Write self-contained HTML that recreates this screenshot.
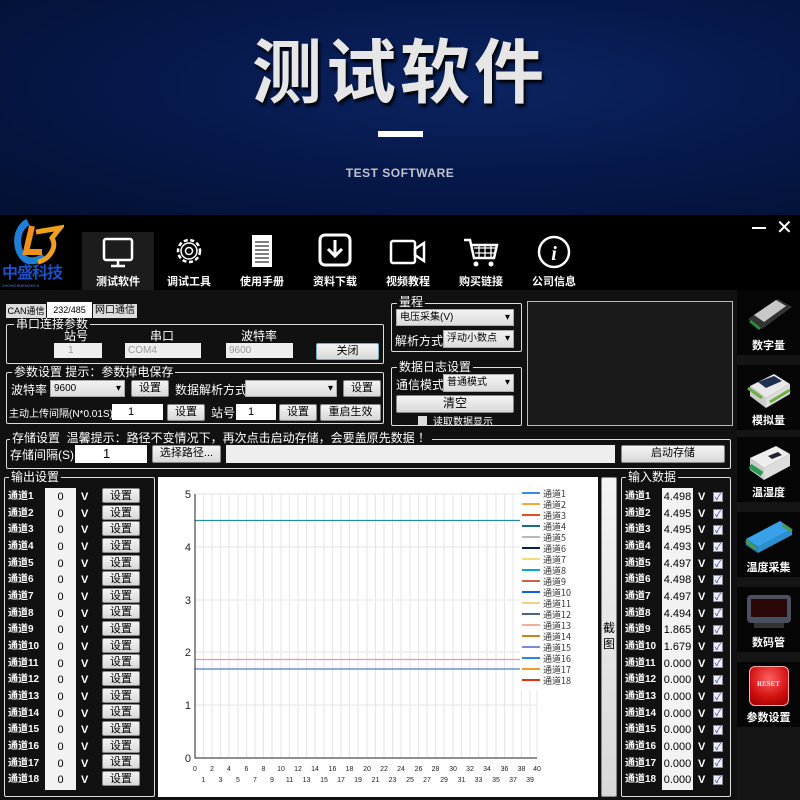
<!DOCTYPE html>
<html><head><meta charset="utf-8"><style>
*{margin:0;padding:0;box-sizing:border-box}
body{width:800px;height:800px;overflow:hidden;background:#000;font-family:"Liberation Sans","Noto Sans CJK SC",sans-serif;position:relative;color:#fff}
.a{position:absolute}
.banner{left:0;top:0;width:800px;height:215px;background:radial-gradient(ellipse at 60% 40%,#0b2461 0%,#06184a 50%,#031032 100%)}
.title{left:0;width:800px;top:28px;text-align:center;font-size:70px;font-weight:bold;letter-spacing:4px;color:#e6e6e6;font-family:"Noto Sans CJK SC",sans-serif;text-shadow:2px 3px 3px #000;line-height:80px}
.t{font-size:12px;line-height:14px;color:#fff;white-space:nowrap}
.menu{top:232px;width:72px;height:58px;text-align:center}
.menu .l{position:absolute;top:41px;width:100%;font-size:11px;font-weight:bold;color:#fff}
.grp{border:1px solid #ddd;border-radius:2px}
.gl{background:#111;padding:0 2px;font-size:12px;line-height:13px;color:#fff}
.btn{background:linear-gradient(#f4f4f4,#d8d8d8);border:1px solid #888;color:#000;font-size:11px;text-align:center;line-height:15px;border-radius:2px}
.box{background:#fff;color:#000;font-size:11px;line-height:16px}
.sel{background:linear-gradient(#f2f2f2,#dcdcdc);border:1px solid #aaa;color:#000;font-size:10px;line-height:15px;padding-left:3px}
.sel:after{content:"▾";position:absolute;right:3px;top:0;font-size:10px}
.side{left:737px;width:63px;height:65px;background:#050505;text-align:center}
.side .l{position:absolute;bottom:2px;width:100%;font-size:11px;font-weight:bold}
.cb{width:10px;height:10px;background:#eef;border:1px solid #889;font-size:9px;line-height:8px;color:#236;text-align:center}
</style></head><body>
<div class="a banner"></div>
<div class="a title">测试软件</div>
<div class="a" style="left:378px;top:131px;width:45px;height:6px;background:#fff"></div>
<div class="a" style="left:0;width:800px;top:166px;text-align:center;font-size:12px;font-weight:bold;color:#bfc3cc;letter-spacing:.5px">TEST SOFTWARE</div>

<!-- header -->
<div class="a" style="left:0;top:215px;width:800px;height:75px;background:#000"></div>
<svg class="a" style="left:12px;top:218px" width="52" height="48" viewBox="0 0 52 48">
<path d="M16 4 C4 10 2 30 12 40 C16 44 26 44 32 38" stroke="#1e7fd8" stroke-width="7" fill="none"/>
<path d="M20 8 L14 34 L30 34" stroke="#f0901a" stroke-width="6" fill="none"/>
<path d="M24 14 L48 10 L40 20 C46 30 36 42 26 44" stroke="#f0a020" stroke-width="5" fill="none"/>
</svg>
<div class="a" style="left:2px;top:266px;font-size:16px;font-weight:bold;color:#1d4fc4;letter-spacing:-1px;line-height:16px">中盛科技</div>
<div class="a" style="left:2px;top:283px;font-size:4px;color:#5a7ed8">ZHONGSHENGKEJI</div>
<div class="a menu" style="left:82px;background:#1c1c1c"><svg width="34" height="34" viewBox="0 0 34 34" style="margin-top:4px"><rect x="3" y="3" width="28" height="21" rx="2" fill="none" stroke="#fff" stroke-width="2.5"/><path d="M17 24v5M10 30h14" stroke="#fff" stroke-width="2.5"/></svg><div class="l">测试软件</div></div>
<div class="a menu" style="left:153px"><svg width="34" height="34" viewBox="0 0 34 34" style="margin-top:2px"><circle cx="17" cy="17" r="11" fill="none" stroke="#fff" stroke-width="2.5" stroke-dasharray="4 2.6"/><circle cx="17" cy="17" r="8" fill="none" stroke="#fff" stroke-width="1.5"/><circle cx="17" cy="17" r="3.5" fill="none" stroke="#fff" stroke-width="1.5"/></svg><div class="l">调试工具</div></div>
<div class="a menu" style="left:226px"><svg width="34" height="38" viewBox="0 0 34 38"><rect x="7" y="3" width="20" height="32" fill="#fff"/><path d="M10 10h14M10 14h14M10 18h14M10 22h14M10 26h14M10 30h14" stroke="#333" stroke-width="1.2"/></svg><div class="l">使用手册</div></div>
<div class="a menu" style="left:299px"><svg width="36" height="36" viewBox="0 0 36 36"><rect x="3" y="3" width="30" height="30" rx="5" fill="none" stroke="#fff" stroke-width="3"/><path d="M18 8v16M11 17l7 7 7-7" stroke="#fff" stroke-width="3" fill="none"/></svg><div class="l">资料下载</div></div>
<div class="a menu" style="left:372px"><svg width="40" height="34" viewBox="0 0 40 34" style="margin-top:3px"><rect x="3" y="6" width="24" height="22" rx="2" fill="none" stroke="#fff" stroke-width="2.5"/><path d="M27 14l9-6v18l-9-6z" fill="none" stroke="#fff" stroke-width="2.5"/></svg><div class="l">视频教程</div></div>
<div class="a menu" style="left:445px"><svg width="40" height="36" viewBox="0 0 40 36" style="margin-top:2px"><path d="M3 6h6l4 18h20l3-13H11" fill="none" stroke="#fff" stroke-width="2.5"/><path d="M13 14h22M14 19h20M18 11v13M24 11v13M30 11v13" stroke="#fff" stroke-width="1.3"/><circle cx="15" cy="30" r="2.5" fill="#fff"/><circle cx="30" cy="30" r="2.5" fill="#fff"/></svg><div class="l">购买链接</div></div>
<div class="a menu" style="left:518px"><svg width="36" height="36" viewBox="0 0 36 36" style="margin-top:2px"><circle cx="18" cy="18" r="15" fill="none" stroke="#fff" stroke-width="2.5"/><text x="18" y="26" text-anchor="middle" font-family="Liberation Serif" font-style="italic" font-weight="bold" font-size="20" fill="#fff">i</text></svg><div class="l">公司信息</div></div>
<div class="a" style="left:752px;top:227px;width:14px;height:2px;background:#fff"></div>
<div class="a" style="left:776px;top:215px;font-size:20px;color:#fff">✕</div>

<!-- main bg -->
<div class="a" style="left:0;top:290px;width:737px;height:510px;background:#111"></div>

<!-- tabs -->
<div class="a" style="left:6px;top:304px;width:40px;height:14px;background:#ddd;color:#000;font-size:9px;line-height:14px;text-align:center">CAN通信</div>
<div class="a" style="left:47px;top:302px;width:45px;height:16px;background:#fff;color:#000;font-size:9px;line-height:16px;text-align:center">232/485</div>
<div class="a" style="left:93px;top:304px;width:44px;height:14px;background:#ddd;color:#000;font-size:10px;line-height:14px;text-align:center">网口通信</div>

<div class="a grp" style="left:6px;top:324px;width:378px;height:40px"></div>
<div class="a gl" style="left:14px;top:318px">串口连接参数</div>
<div class="a t" style="left:64px;top:329px">站号</div>
<div class="a t" style="left:150px;top:329px">串口</div>
<div class="a t" style="left:241px;top:329px">波特率</div>
<div class="a" style="left:54px;top:343px;width:48px;height:15px;background:#eee;color:#999;font-size:10px;line-height:15px;padding-left:14px">1</div>
<div class="a" style="left:125px;top:343px;width:76px;height:15px;background:#eee;color:#999;font-size:10px;line-height:15px;padding-left:3px">COM4</div>
<div class="a" style="left:226px;top:343px;width:67px;height:15px;background:#eee;color:#999;font-size:10px;line-height:15px;padding-left:3px">9600</div>
<div class="a btn" style="left:316px;top:343px;width:63px;height:17px;border-color:#7ab">关闭</div>

<div class="a grp" style="left:6px;top:372px;width:378px;height:52px"></div>
<div class="a gl" style="left:12px;top:366px">参数设置 提示：参数掉电保存</div>
<div class="a t" style="left:11px;top:383px">波特率</div>
<div class="a sel" style="left:50px;top:380px;width:75px;height:17px">9600</div>
<div class="a btn" style="left:131px;top:380px;width:38px;height:17px">设置</div>
<div class="a t" style="left:175px;top:383px">数据解析方式</div>
<div class="a sel" style="left:245px;top:380px;width:92px;height:17px"></div>
<div class="a btn" style="left:343px;top:380px;width:38px;height:17px">设置</div>
<div class="a" style="left:9px;top:405px;font-size:10px;color:#fff">主动上传间隔(N*0.01S)</div>
<div class="a box" style="left:112px;top:404px;width:51px;height:16px;padding-left:16px">1</div>
<div class="a btn" style="left:167px;top:404px;width:38px;height:17px">设置</div>
<div class="a t" style="left:211px;top:406px">站号</div>
<div class="a box" style="left:236px;top:404px;width:40px;height:16px;padding-left:12px">1</div>
<div class="a btn" style="left:279px;top:404px;width:38px;height:17px">设置</div>
<div class="a btn" style="left:320px;top:404px;width:61px;height:17px">重启生效</div>

<div class="a grp" style="left:391px;top:303px;width:131px;height:49px"></div>
<div class="a gl" style="left:397px;top:296px">量程</div>
<div class="a sel" style="left:396px;top:309px;width:118px;height:17px">电压采集(V)</div>
<div class="a t" style="left:395px;top:334px">解析方式</div>
<div class="a sel" style="left:443px;top:330px;width:71px;height:18px">浮动小数点</div>
<div class="a grp" style="left:391px;top:367px;width:131px;height:59px"></div>
<div class="a gl" style="left:397px;top:361px">数据日志设置</div>
<div class="a t" style="left:396px;top:378px">通信模式</div>
<div class="a sel" style="left:443px;top:374px;width:71px;height:18px">普通模式</div>
<div class="a btn" style="left:396px;top:395px;width:118px;height:18px;font-size:12px">清空</div>
<div class="a" style="left:418px;top:416px;width:9px;height:9px;background:#ddd"></div>
<div class="a" style="left:433px;top:413px;font-size:10px;color:#fff">读取数据显示</div>
<div class="a" style="left:527px;top:301px;width:206px;height:125px;background:#1a1a1a;border:1px solid #bbb"></div>

<div class="a grp" style="left:6px;top:439px;width:725px;height:30px"></div>
<div class="a gl" style="left:10px;top:432px">存储设置&nbsp; 温馨提示：路径不变情况下，再次点击启动存储，会要盖原先数据 ！</div>
<div class="a t" style="left:10px;top:448px">存储间隔(S)</div>
<div class="a box" style="left:75px;top:445px;width:72px;height:18px;padding-left:28px;font-size:13px;line-height:18px">1</div>
<div class="a btn" style="left:152px;top:445px;width:69px;height:18px;font-size:11px">选择路径...</div>
<div class="a" style="left:226px;top:445px;width:389px;height:18px;background:#eee"></div>
<div class="a btn" style="left:621px;top:445px;width:104px;height:18px;font-size:11px">启动存储</div>

<!-- output group -->
<div class="a grp" style="left:4px;top:477px;width:151px;height:320px"></div>
<div class="a gl" style="left:9px;top:471px">输出设置</div>
<div class="a" style="left:8px;top:489px;line-height:16.65px;font-size:10px;font-weight:bold;color:#fff">通道1<br>通道2<br>通道3<br>通道4<br>通道5<br>通道6<br>通道7<br>通道8<br>通道9<br>通道10<br>通道11<br>通道12<br>通道13<br>通道14<br>通道15<br>通道16<br>通道17<br>通道18</div>
<div class="a" style="left:45px;top:488px;width:31px;height:302px;background:#f2f2f2;color:#000;text-align:center;line-height:16.65px;font-size:11px;padding-top:1px">0<br>0<br>0<br>0<br>0<br>0<br>0<br>0<br>0<br>0<br>0<br>0<br>0<br>0<br>0<br>0<br>0<br>0</div>
<div class="a" style="left:81px;top:489px;line-height:16.65px;font-size:11px;font-weight:bold;color:#fff">V<br>V<br>V<br>V<br>V<br>V<br>V<br>V<br>V<br>V<br>V<br>V<br>V<br>V<br>V<br>V<br>V<br>V</div>
<div class="a" style="left:102px;top:488px;width:38px">
<div class="btn" style="height:15px;margin-bottom:1.65px">设置</div><div class="btn" style="height:15px;margin-bottom:1.65px">设置</div><div class="btn" style="height:15px;margin-bottom:1.65px">设置</div><div class="btn" style="height:15px;margin-bottom:1.65px">设置</div><div class="btn" style="height:15px;margin-bottom:1.65px">设置</div><div class="btn" style="height:15px;margin-bottom:1.65px">设置</div><div class="btn" style="height:15px;margin-bottom:1.65px">设置</div><div class="btn" style="height:15px;margin-bottom:1.65px">设置</div><div class="btn" style="height:15px;margin-bottom:1.65px">设置</div><div class="btn" style="height:15px;margin-bottom:1.65px">设置</div><div class="btn" style="height:15px;margin-bottom:1.65px">设置</div><div class="btn" style="height:15px;margin-bottom:1.65px">设置</div><div class="btn" style="height:15px;margin-bottom:1.65px">设置</div><div class="btn" style="height:15px;margin-bottom:1.65px">设置</div><div class="btn" style="height:15px;margin-bottom:1.65px">设置</div><div class="btn" style="height:15px;margin-bottom:1.65px">设置</div><div class="btn" style="height:15px;margin-bottom:1.65px">设置</div><div class="btn" style="height:15px;margin-bottom:1.65px">设置</div></div>

<!-- chart -->
<svg class="a" style="left:158px;top:477px" width="440" height="320" viewBox="158 477 440 320">
<rect x="158" y="477" width="440" height="320" fill="#fff"/>
<g stroke="#e6e6e6" stroke-width="1">
<path d="M203.5 494V758M212 494V758M220.5 494V758M229 494V758M238 494V758M246.5 494V758M255 494V758M263.5 494V758M272 494V758M281 494V758M289.5 494V758M298 494V758M306.5 494V758M315 494V758M324 494V758M332.5 494V758M341 494V758M349.5 494V758M358 494V758M367 494V758M375.5 494V758M384 494V758M392.5 494V758M401 494V758M410 494V758M418.5 494V758M427 494V758M435.5 494V758M444 494V758M453 494V758M461.5 494V758M470 494V758M478.5 494V758M487 494V758M496 494V758M504.5 494V758M513 494V758M521.5 494V758M530 494V758M537 494V758"/>
<path d="M195 494H537M195 547H537M195 600H537M195 652H537M195 705H537"/>
</g>
<path d="M195 520.5H520" stroke="#2a8a9a" stroke-width="1.3"/>
<path d="M195 659.5H520" stroke="#e0a090" stroke-width="1.3"/>
<path d="M195 669H520" stroke="#4a7ed0" stroke-width="1.3"/>
<path d="M195 494V758H537" stroke="#222" fill="none"/>
<g font-size="11" fill="#222" font-family="Liberation Sans" text-anchor="end"><text x="191" y="498">5</text><text x="191" y="551">4</text><text x="191" y="604">3</text><text x="191" y="656">2</text><text x="191" y="709">1</text><text x="191" y="762">0</text></g>
<g font-size="7" fill="#222" font-family="Liberation Sans" text-anchor="middle">
<text x="195" y="771">0</text><text x="212" y="771">2</text><text x="229" y="771">4</text><text x="246.5" y="771">6</text><text x="263.5" y="771">8</text><text x="281" y="771">10</text><text x="298" y="771">12</text><text x="315" y="771">14</text><text x="332.5" y="771">16</text><text x="349.5" y="771">18</text><text x="367" y="771">20</text><text x="384" y="771">22</text><text x="401" y="771">24</text><text x="418.5" y="771">26</text><text x="435.5" y="771">28</text><text x="453" y="771">30</text><text x="470" y="771">32</text><text x="487" y="771">34</text><text x="504.5" y="771">36</text><text x="521.5" y="771">38</text><text x="537" y="771">40</text>
<text x="203.5" y="782">1</text><text x="220.5" y="782">3</text><text x="238" y="782">5</text><text x="255" y="782">7</text><text x="272" y="782">9</text><text x="289.5" y="782">11</text><text x="306.5" y="782">13</text><text x="324" y="782">15</text><text x="341" y="782">17</text><text x="358" y="782">19</text><text x="375.5" y="782">21</text><text x="392.5" y="782">23</text><text x="410" y="782">25</text><text x="427" y="782">27</text><text x="444" y="782">29</text><text x="461.5" y="782">31</text><text x="478.5" y="782">33</text><text x="496" y="782">35</text><text x="513" y="782">37</text><text x="530" y="782">39</text></g>
<rect x="520" y="487" width="78" height="203" fill="#fff"/>
<g stroke-width="2">
<path d="M522 493h18" stroke="#3a8ae8"/><path d="M522 504h18" stroke="#f5a840"/><path d="M522 515h18" stroke="#e05020"/><path d="M522 526h18" stroke="#1a6a8a"/><path d="M522 537h18" stroke="#b8b8b8"/><path d="M522 548h18" stroke="#0a2050"/><path d="M522 559h18" stroke="#f8d878"/><path d="M522 570h18" stroke="#10a0e0"/><path d="M522 581h18" stroke="#d06040"/><path d="M522 592h18" stroke="#1060e0"/><path d="M522 603h18" stroke="#f0d090"/><path d="M522 614h18" stroke="#506080"/><path d="M522 625h18" stroke="#f0b0a0"/><path d="M522 636h18" stroke="#d08020"/><path d="M522 647h18" stroke="#7090d0"/><path d="M522 658h18" stroke="#3080f0"/><path d="M522 669h18" stroke="#f0a020"/><path d="M522 680h18" stroke="#e03010"/></g>
<g font-size="9" fill="#333" font-family="Noto Sans CJK SC"><text x="543" y="497">通道1</text><text x="543" y="508">通道2</text><text x="543" y="519">通道3</text><text x="543" y="530">通道4</text><text x="543" y="541">通道5</text><text x="543" y="552">通道6</text><text x="543" y="563">通道7</text><text x="543" y="574">通道8</text><text x="543" y="585">通道9</text><text x="543" y="596">通道10</text><text x="543" y="607">通道11</text><text x="543" y="618">通道12</text><text x="543" y="629">通道13</text><text x="543" y="640">通道14</text><text x="543" y="651">通道15</text><text x="543" y="662">通道16</text><text x="543" y="673">通道17</text><text x="543" y="684">通道18</text></g>
</svg>
<div class="a btn" style="left:601px;top:477px;width:16px;height:320px;padding-top:142px;font-size:12px;line-height:16px">截<br>图</div>

<!-- input group -->
<div class="a grp" style="left:621px;top:477px;width:110px;height:320px"></div>
<div class="a gl" style="left:626px;top:471px">输入数据</div>
<div class="a" style="left:625px;top:489px;line-height:16.65px;font-size:10px;font-weight:bold;color:#fff">通道1<br>通道2<br>通道3<br>通道4<br>通道5<br>通道6<br>通道7<br>通道8<br>通道9<br>通道10<br>通道11<br>通道12<br>通道13<br>通道14<br>通道15<br>通道16<br>通道17<br>通道18</div>
<div class="a" style="left:662px;top:488px;width:31px;height:302px;background:#f2f2f2;color:#000;text-align:center;line-height:16.65px;font-size:11px;padding-top:1px">4.498<br>4.495<br>4.495<br>4.493<br>4.497<br>4.498<br>4.497<br>4.494<br>1.865<br>1.679<br>0.000<br>0.000<br>0.000<br>0.000<br>0.000<br>0.000<br>0.000<br>0.000</div>
<div class="a" style="left:698px;top:489px;line-height:16.65px;font-size:11px;font-weight:bold;color:#fff">V<br>V<br>V<br>V<br>V<br>V<br>V<br>V<br>V<br>V<br>V<br>V<br>V<br>V<br>V<br>V<br>V<br>V</div>
<div class="a" style="left:713px;top:492px;font-size:9px;line-height:16.65px;color:#235;">
<div class="cb" style="margin-bottom:6.65px">✓</div><div class="cb" style="margin-bottom:6.65px">✓</div><div class="cb" style="margin-bottom:6.65px">✓</div><div class="cb" style="margin-bottom:6.65px">✓</div><div class="cb" style="margin-bottom:6.65px">✓</div><div class="cb" style="margin-bottom:6.65px">✓</div><div class="cb" style="margin-bottom:6.65px">✓</div><div class="cb" style="margin-bottom:6.65px">✓</div><div class="cb" style="margin-bottom:6.65px">✓</div><div class="cb" style="margin-bottom:6.65px">✓</div><div class="cb" style="margin-bottom:6.65px">✓</div><div class="cb" style="margin-bottom:6.65px">✓</div><div class="cb" style="margin-bottom:6.65px">✓</div><div class="cb" style="margin-bottom:6.65px">✓</div><div class="cb" style="margin-bottom:6.65px">✓</div><div class="cb" style="margin-bottom:6.65px">✓</div><div class="cb" style="margin-bottom:6.65px">✓</div><div class="cb">✓</div></div>

<!-- side panel -->
<div class="a" style="left:737px;top:290px;width:63px;height:510px;background:#151515"></div>
<div class="a side" style="top:290px"><svg width="50" height="42" viewBox="0 0 50 42" style="margin-top:3px"><path d="M4 26l30-20 14 8-30 22z" fill="#333"/><path d="M10 22l22-15 10 6-22 16z" fill="#c8c8c8"/><path d="M6 28l10 8" stroke="#2a8a40" stroke-width="3"/></svg><div class="l">数字量</div></div>
<div class="a side" style="top:365px"><svg width="50" height="42" viewBox="0 0 50 42" style="margin-top:3px"><path d="M6 18l24-12 16 10-24 14z" fill="#e8e8e8"/><path d="M6 18v10l16 12v-10z" fill="#ccc"/><path d="M22 30v10l24-14v-10z" fill="#ddd"/><path d="M14 14l16-6 8 5-16 7z" fill="#1e3050"/><path d="M4 20l14 10M26 34l20-12" stroke="#6bb040" stroke-width="3"/></svg><div class="l">模拟量</div></div>
<div class="a side" style="top:437px"><svg width="50" height="42" viewBox="0 0 50 42" style="margin-top:3px"><path d="M6 18l26-12 14 8-26 14z" fill="#eee"/><path d="M6 18v12l14 10v-12z" fill="#ccc"/><path d="M20 28v12l26-14v-12z" fill="#ddd"/><path d="M24 16l10-4 4 3-10 4z" fill="#223"/><path d="M6 26l12 8" stroke="#2a9a50" stroke-width="5"/></svg><div class="l">温湿度</div></div>
<div class="a side" style="top:512px"><svg width="54" height="42" viewBox="0 0 54 42" style="margin-top:3px"><path d="M4 24l34-18 12 8-34 18z" fill="#3aa0e8"/><path d="M4 24v6l12 8v-6z" fill="#2080c0"/><path d="M16 32v6l34-18v-6z" fill="#2a90d0"/><path d="M4 26l10 8M40 10l10 6" stroke="#4a9a40" stroke-width="3"/></svg><div class="l">温度采集</div></div>
<div class="a side" style="top:587px"><svg width="50" height="40" viewBox="0 0 50 40" style="margin-top:5px"><rect x="3" y="3" width="44" height="28" rx="4" fill="#4a5060"/><rect x="7" y="7" width="36" height="18" fill="#2a0808"/><rect x="10" y="31" width="30" height="5" fill="#333"/></svg><div class="l">数码管</div></div>
<div class="a side" style="top:662px"><div style="margin:4px auto 0;width:40px;height:40px;border-radius:6px;background:radial-gradient(circle at 50% 30%,#ff6060,#d01010 60%,#900);border:1px solid #faa;font-family:'Liberation Serif';font-size:7px;font-weight:bold;line-height:34px;color:#fdd">RESET</div><div class="l">参数设置</div></div>
</body></html>
